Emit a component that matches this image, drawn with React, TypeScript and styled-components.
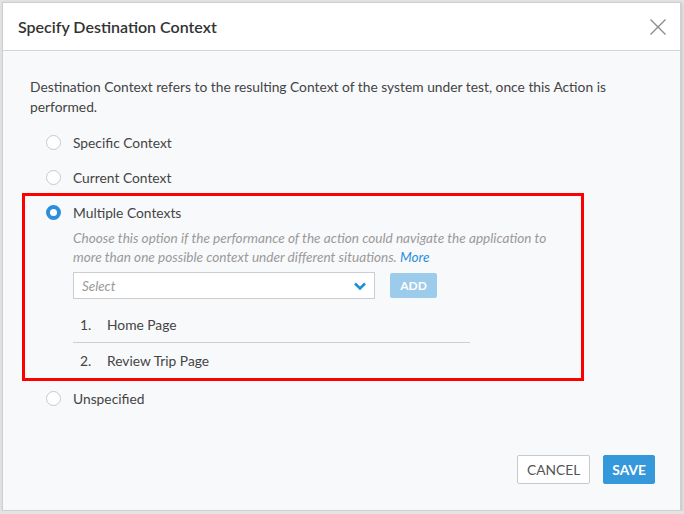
import React from "react";
import styled, { createGlobalStyle } from "styled-components";

const Global = createGlobalStyle`
  html, body {
    margin: 0;
    padding: 0;
    background: #e4e4e4;
    font-family: Lato, "Open Sans", sans-serif;
  }
`;

const Modal = styled.div`
  box-sizing: border-box;
  margin: 2px 0 0 2px;
  width: 679px;
  height: 509px;
  background: #f8f9fb;
  border: 1px solid #cfcfcf;
  box-shadow: 1px 1px 3px rgba(0, 0, 0, 0.15);
  display: flex;
  flex-direction: column;
`;

const Header = styled.div`
  height: 47px;
  padding: 0 14px 0 15px;
  background: #fff;
  border-bottom: 1px solid #d6d6d6;
  display: flex;
  align-items: center;
  justify-content: space-between;
`;

const Title = styled.h1`
  margin: 0;
  font-size: 16px;
  font-weight: 600;
  color: #333;
`;

const Close = styled.button`
  border: none;
  background: none;
  padding: 0;
  width: 16px;
  height: 16px;
  cursor: pointer;
  display: flex;
`;

const Body = styled.div`
  flex: 1;
  padding: 26px 30px 0 27px;
  display: flex;
  flex-direction: column;
`;

const Intro = styled.p`
  margin: 0 0 8px 0;
  font-size: 13.8px;
  line-height: 20px;
  color: #444;
`;

const Row = styled.label<{ $h?: number }>`
  display: flex;
  align-items: center;
  height: ${(p) => p.$h || 35}px;
  padding-left: 16px;
  font-size: 13.8px;
  color: #444;
  cursor: pointer;
`;

const Radio = styled.span<{ $on?: boolean }>`
  box-sizing: border-box;
  width: 15px;
  height: 15px;
  border-radius: 50%;
  background: #fff;
  border: ${(p) => (p.$on ? "4px solid #2d8fdb" : "1px solid #c9c9c9")};
  margin-right: 12px;
  flex-shrink: 0;
`;

const Highlight = styled.div`
  margin: -2px 0 0 -8px;
  width: 562px;
  box-sizing: border-box;
  border: 3px solid #f00;
  padding-left: 5px;
`;

const Nested = styled.div`
  padding-left: 43px;
`;

const Help = styled.p`
  margin: 0;
  font-size: 13.6px;
  line-height: 19px;
  font-style: italic;
  color: #9a9a9a;
  width: 490px;
`;

const More = styled.a`
  color: #2d8fdb;
  text-decoration: none;
`;

const Controls = styled.div`
  display: flex;
  align-items: center;
  gap: 15px;
  margin-top: 5px;
`;

const Select = styled.div`
  box-sizing: border-box;
  width: 302px;
  height: 27px;
  background: #fff;
  border: 1px solid #cdcdcd;
  display: flex;
  align-items: center;
  justify-content: space-between;
  padding: 0 7px 0 8px;
  font-size: 13.4px;
  font-style: italic;
  color: #999;
`;

const AddButton = styled.button`
  height: 25px;
  width: 47px;
  border: none;
  border-radius: 2px;
  background: #9dcbeb;
  color: #fff;
  font-family: inherit;
  font-weight: 700;
  font-size: 12px;
  padding: 0;
`;

const List = styled.ol`
  list-style: none;
  margin: 8px 0 0 0;
  padding: 0;
  width: 397px;
`;

const Item = styled.li<{ $last?: boolean }>`
  display: flex;
  align-items: center;
  height: 35px;
  padding-left: 7px;
  font-size: 13.8px;
  color: #444;
  border-bottom: ${(p) => (p.$last ? "none" : "1px solid #cfcfcf")};
`;

const Num = styled.span`
  width: 27px;
`;

const Footer = styled.div`
  display: flex;
  justify-content: flex-end;
  gap: 13px;
  padding: 0 25px 26px 0;
`;

const Button = styled.button<{ $primary?: boolean }>`
  height: 29px;
  padding: 0 ${(p) => (p.$primary ? 8 : 9)}px;
  border-radius: 2px;
  font-family: inherit;
  font-size: 13.8px;
  font-weight: ${(p) => (p.$primary ? 700 : 400)};
  border: 1px solid ${(p) => (p.$primary ? "#3498db" : "#c9c9c9")};
  background: ${(p) => (p.$primary ? "#3498db" : "#fff")};
  color: ${(p) => (p.$primary ? "#fff" : "#555")};
  cursor: pointer;
`;

export default () => {
  return (
    <>
      <Global />
      <Modal>
        <Header>
          <Title>Specify Destination Context</Title>
          <Close aria-label="Close">
            <svg width="16" height="16" viewBox="0 0 16 16">
              <path d="M0.5 0.5 L15.5 15.5 M15.5 0.5 L0.5 15.5" stroke="#8a8a8a" strokeWidth="1.3" fill="none" />
            </svg>
          </Close>
        </Header>
        <Body>
          <Intro>
            Destination Context refers to the resulting Context of the system under test, once this Action is
            performed.
          </Intro>
          <Row>
            <Radio />
            Specific Context
          </Row>
          <Row>
            <Radio />
            Current Context
          </Row>
          <Highlight>
            <Row $h={33}>
              <Radio $on />
              Multiple Contexts
            </Row>
            <Nested>
              <Help>
                Choose this option if the performance of the action could navigate the application to more than one
                possible context under different situations. <More href="#">More</More>
              </Help>
              <Controls>
                <Select>
                  Select
                  <svg width="14" height="10" viewBox="0 0 14 10">
                    <path d="M2 2.5 L7 7.5 L12 2.5" stroke="#1b8fd2" strokeWidth="2.6" fill="none" />
                  </svg>
                </Select>
                <AddButton>ADD</AddButton>
              </Controls>
              <List>
                <Item>
                  <Num>1.</Num>Home Page
                </Item>
                <Item $last>
                  <Num>2.</Num>Review Trip Page
                </Item>
              </List>
            </Nested>
          </Highlight>
          <Row>
            <Radio />
            Unspecified
          </Row>
        </Body>
        <Footer>
          <Button>CANCEL</Button>
          <Button $primary>SAVE</Button>
        </Footer>
      </Modal>
    </>
  );
};
